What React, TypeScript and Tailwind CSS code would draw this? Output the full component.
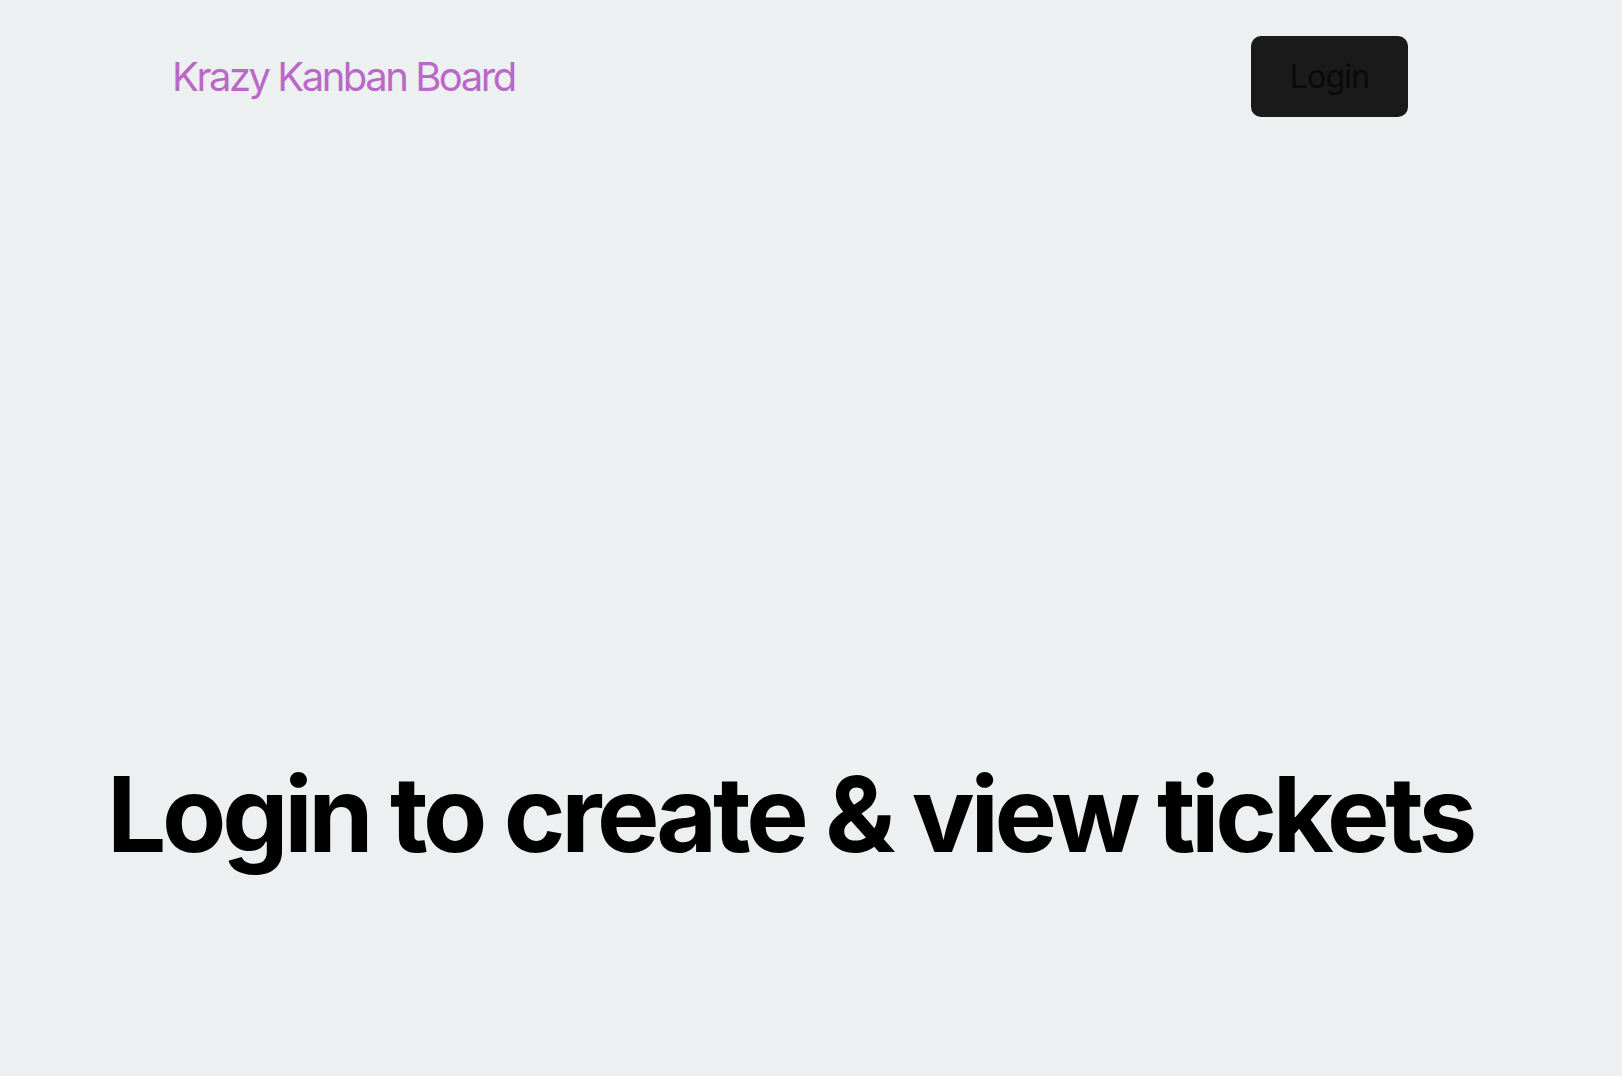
export default function App() {
  return (
    <div className="min-h-screen w-full bg-[#ecf0f1]" style={{ fontFamily: "Inter, 'Noto Sans', sans-serif" }}>
      <div className="flex w-[1236px] ml-[172px] pt-[36px] items-center justify-between">
        <div className="text-[40px] leading-none text-[#ba68c8] tracking-[-0.062em]">Krazy Kanban Board</div>
        <button className="w-[157px] h-[81px] rounded-[10px] bg-[#1a1a1a] text-[32px] text-[#0a0a0a] leading-none tracking-[-0.025em]">
          Login
        </button>
      </div>
      <div className="pl-[107px] pt-[644px] whitespace-nowrap">
        <h1 className="text-[105px] font-bold leading-none text-black tracking-[-0.041em]">Login to create &amp; view tickets</h1>
      </div>
    </div>
  );
}
